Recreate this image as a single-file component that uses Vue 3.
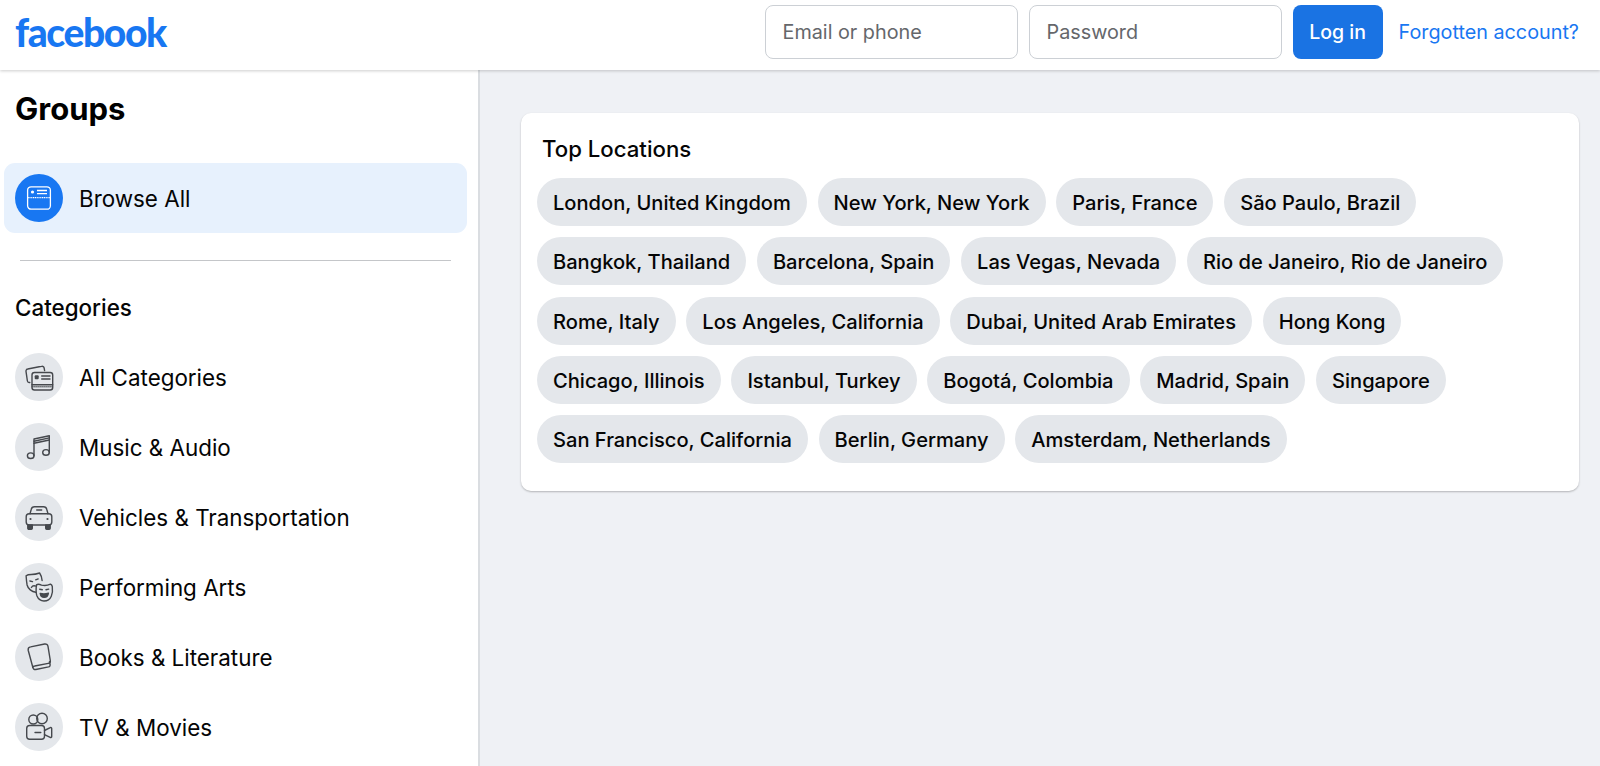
<script setup>
const cats = [
  { n: 'All Categories', k: 'all' },
  { n: 'Music & Audio', k: 'music' },
  { n: 'Vehicles & Transportation', k: 'car' },
  { n: 'Performing Arts', k: 'arts' },
  { n: 'Books & Literature', k: 'book' },
  { n: 'TV & Movies', k: 'tv' }
]
const places = [
  'London, United Kingdom', 'New York, New York', 'Paris, France', 'São Paulo, Brazil',
  'Bangkok, Thailand', 'Barcelona, Spain', 'Las Vegas, Nevada', 'Rio de Janeiro, Rio de Janeiro',
  'Rome, Italy', 'Los Angeles, California', 'Dubai, United Arab Emirates', 'Hong Kong',
  'Chicago, Illinois', 'Istanbul, Turkey', 'Bogotá, Colombia', 'Madrid, Spain', 'Singapore',
  'San Francisco, California', 'Berlin, Germany', 'Amsterdam, Netherlands'
]
</script>

<template>
  <div class="page">
    <header class="top">
      <div class="logo">facebook</div>
      <div class="login">
        <div class="field">Email or phone</div>
        <div class="field">Password</div>
        <button class="btn">Log in</button>
        <a class="forgot">Forgotten account?</a>
      </div>
    </header>
    <div class="body">
      <aside class="side">
        <h1 class="title">Groups</h1>
        <div class="browse">
          <span class="ico blue">
            <svg width="26" height="26" viewBox="0 0 26 26" fill="none" stroke="#fff" stroke-width="1.3">
              <rect x="1.600" y="1.800" width="22.800" height="22.400" rx="3.500" />
              <path d="M1.600 12.600h22.800" stroke-dasharray="1.200 .6" />
              <circle cx="6.500" cy="7" r="1.600" fill="#fff" stroke="none" />
              <path d="M11 5.500h10M11 8.600h10" />
            </svg>
          </span>
          <span class="lbl">Browse All</span>
        </div>
        <div class="rule"></div>
        <h2 class="sub">Categories</h2>
        <div v-for="c in cats" :key="c.k" class="item">
          <span class="ico">
            <svg width="30" height="30" viewBox="0 0 30 30" fill="none" stroke="#45484d" stroke-width="1.400" stroke-linecap="round" stroke-linejoin="round">
              <g v-if="c.k === 'all'">
                <path d="M5.800 20.500H5.300a1.800 1.800 0 0 1-1.900-1.500L2 9.300a2 2 0 0 1 1.700-2.300l14-2.700a2 2 0 0 1 2.400 1.600l.5 2.700" />
                <rect x="8" y="10.500" width="20.700" height="17.500" rx="2.500" />
                <path d="M8 22.800h20.700" />
                <path d="M8 24.800h20.700" stroke-dasharray="1.200 .8" stroke-width="1" />
                <rect x="10.700" y="13.200" width="4" height="4" rx="1" fill="#45484d" stroke="none" />
                <path d="M17.700 14h8.300M17.700 17h8.300" />
              </g>
              <g v-else-if="c.k === 'music'">
                <path d="M10 23.700V7l15.300-3.300v16.600" />
                <path d="M10 11.300l15.300-3.300" />
                <path d="M10 9.200l15.300-3.300" />
                <ellipse cx="6.700" cy="23.700" rx="3.300" ry="2.800" />
                <ellipse cx="22" cy="20.400" rx="3.300" ry="2.800" />
              </g>
              <g v-else-if="c.k === 'car'">
                <path d="M6 11.800l1.200-4.300a3.500 3.500 0 0 1 3.300-2.700h9a3.500 3.500 0 0 1 3.300 2.700l1.200 4.300" />
                <rect x="2.200" y="11.800" width="25.600" height="11.200" rx="3" />
                <path d="M3.800 23h4.500v3.200a1 1 0 0 1-1 1H4.800a1 1 0 0 1-1-1zM21.700 23h4.500v3.200a1 1 0 0 1-1 1h-2.500a1 1 0 0 1-1-1z" fill="#45484d" />
                <path d="M12.700 8h5" />
                <circle cx="6.500" cy="17" r="1.100" fill="#45484d" stroke="none" />
                <circle cx="23.500" cy="17" r="1.100" fill="#45484d" stroke="none" />
              </g>
              <g v-else-if="c.k === 'arts'">
                <path d="M11.800 20.200c-4-.4-7.800-3.300-8.700-7.200-.5-2.600-.8-6-1-9.200 1.500-1.200 3.200-1.300 5.200-1.300 3 0 6.300-.8 8.300-1.500 1.300 1.800 2.200 4.500 2.500 7.500" />
                <path d="M5.900 9l2.600.6M11.700 7.800l2.500-.9M7.400 15.500c.8-1.400 2.300-2 3.900-1.500" />
                <path d="M12.500 12.900c1.300-1 3-.7 5 .2 2.800.8 6.400.3 9-.9 1 .5 1.500 1.200 1.800 2.300.4 3.200.2 7-1 9.700-1.300 3-4.300 4.800-7.300 4.800-3.200 0-5.800-2-7-4.900-1-2.800-1.100-7.300-.5-11.200z" />
                <path d="M15.700 17.200l2.600.5M22 17.700l2.700-.6" />
                <path d="M16.200 21.400c2.500.7 5.500.7 8.200-.3-.4 2.800-2 4.300-4.200 4.300s-3.600-1.500-4-4z" fill="#45484d" />
              </g>
              <g v-else-if="c.k === 'book'">
                <path d="M4.200 8.200a2.900 2.900 0 0 1 2.400-3.300l14-2.900a2.900 2.900 0 0 1 3.400 2.300L26.300 18.500a2.500 2.500 0 0 1-2 2.900L10.700 24a2.700 2.700 0 0 0-1.900 1.300z" />
                <path d="M8.800 25.300a2.500 2.500 0 0 0 3 2.200l12.800-2.600a2 2 0 0 0 1.500-2.400l-.6-2.700" />
              </g>
              <g v-else>
                <circle cx="9.300" cy="7.500" r="4.500" />
                <circle cx="18" cy="6.500" r="5.300" />
                <rect x="2.700" y="13.500" width="17.800" height="13.800" rx="3" />
                <path d="M11 20.500h5.800" />
                <path d="M20.500 18.500l5.700-2.800a1 1 0 0 1 1.500.9v7.900a1 1 0 0 1-1.500.9l-5.700-2.800" />
              </g>
            </svg>
          </span>
          <span class="lbl">{{ c.n }}</span>
        </div>
      </aside>
      <main class="main">
        <section class="card">
          <h3 class="head">Top Locations</h3>
          <div class="pills">
            <span v-for="p in places" :key="p" class="pill">{{ p }}</span>
          </div>
        </section>
      </main>
    </div>
  </div>
</template>

<style>
html, body { margin: 0; height: 100%; overflow: hidden; }
</style>

<style scoped>
.page { width: 1600px; height: 766px; overflow: hidden; font-family: Inter, "Liberation Sans", sans-serif; color: #050505; background: #eff1f5; display: flex; flex-direction: column; }
.top { height: 70px; flex: none; box-sizing: border-box; background: #fff; display: flex; align-items: center; justify-content: space-between; padding: 0 21px 0 15px; box-shadow: 0 1px 3px rgba(0,0,0,.2); position: relative; z-index: 2; }
.logo { font-family: Lato, sans-serif; font-weight: 900; font-size: 39px; letter-spacing: -1.4px; color: #1877f2; line-height: 1; padding-bottom: 5px; }
.login { display: flex; align-items: center; gap: 11px; padding-bottom: 6px; }
.field { width: 253px; height: 54px; box-sizing: border-box; border: 1px solid #ccd0d5; border-radius: 8px; display: flex; align-items: center; padding-left: 17px; font-size: 19.8px; color: #65676b; background: #fff; }
.btn { width: 90px; height: 54px; border: 0; border-radius: 8px; background: #1a73e3; color: #fff; font: 500 19.5px Inter, sans-serif; margin-right: 5px; }
.forgot { color: #1877f2; font-size: 19.800px; white-space: nowrap; }
.body { flex: 1; display: flex; min-height: 0; }
.side { width: 480px; flex: none; box-sizing: border-box; background: #fff; border-right: 2px solid #dadde1; padding-top: 1px; overflow: hidden; }
.title { margin: 19px 0 0 15px; font-size: 31px; line-height: 37px; font-weight: 700; color: #000; }
.browse { margin: 36px 11px 0 4px; height: 70px; border-radius: 11px; background: #e7f1fd; display: flex; align-items: center; padding-left: 11px; }
.ico { width: 48px; height: 48px; border-radius: 50%; background: #e4e7eb; display: flex; align-items: center; justify-content: center; flex: none; }
.ico.blue { background: #1877f2; }
.lbl { margin-left: 16px; font-size: 22.4px; color: #050505; padding-top: 1px; }
.rule { height: 1px; background: #c4c6c9; margin: 27px 27px 0 20px; }
.sub { margin: 33px 0 0 15px; font-size: 22.4px; line-height: 27px; font-weight: 500; color: #050505; }
.item { height: 70px; display: flex; align-items: center; padding-left: 15px; }
.sub + .item { margin-top: 21px; }
.main { flex: 1; padding: 43px 21px 0 41px; }
.card { background: #fff; border-radius: 10px; height: 378px; box-sizing: border-box; padding: 22px 16px 0; box-shadow: 0 1px 2px rgba(0,0,0,.25); }
.head { margin: 0 0 0 5px; font-size: 22.2px; line-height: 28px; font-weight: 500; color: #050505; }
.pills { display: flex; flex-wrap: wrap; gap: 11.300px 10.700px; margin-top: 15px; max-width: 1020px; }
.pill { height: 48px; line-height: 50px; padding: 0 16px; border-radius: 24px; background: #e4e7eb; font-size: 20.1px; font-weight: 500; white-space: nowrap; color: #050505; }
</style>
